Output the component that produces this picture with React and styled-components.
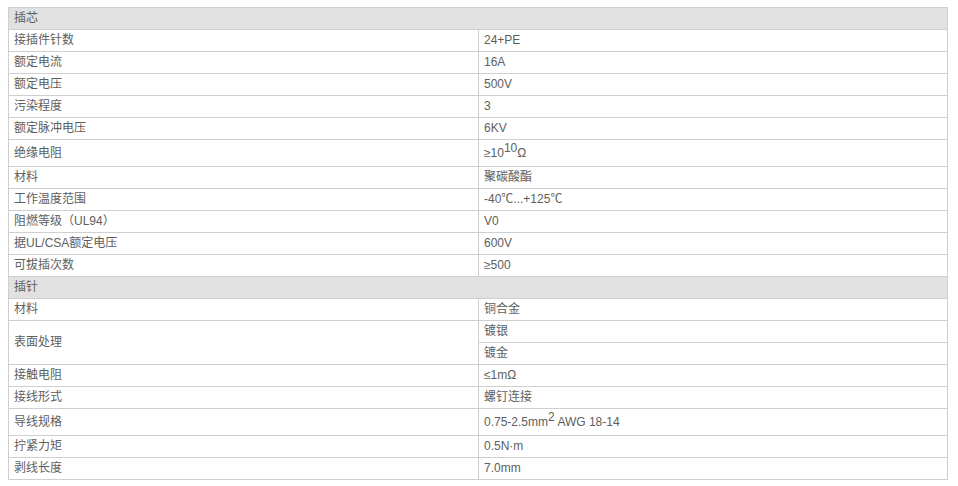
import React from 'react';
import styled, { createGlobalStyle } from 'styled-components';

const GlobalStyle = createGlobalStyle`
  body {
    margin: 0;
    background: #fff;
    font-family: "Liberation Sans", "Noto Sans CJK SC", Arial, sans-serif;
  }
`;

const Page = styled.div`
  padding: 7px 11px 0 8px;
`;

const Table = styled.table`
  width: 940px;
  border-collapse: collapse;
  table-layout: fixed;
  font-size: 12px;
  color: #5e5e5e;
`;

const Cell = styled.td`
  border: 1px solid #cfcfcf;
  padding: 0 5px;
  height: 21px;
  line-height: 21px;
  vertical-align: middle;
  background: ${({ $head }) => ($head ? '#e1e1e1' : '#fff')};
  white-space: nowrap;
`;

const Sup = styled.sup`
  font-size: 12px;
  line-height: 0;
  vertical-align: 5px;
`;

const sections = [
  {
    title: '插芯',
    rows: [
      ['接插件针数', '24+PE'],
      ['额定电流', '16A'],
      ['额定电压', '500V'],
      ['污染程度', '3'],
      ['额定脉冲电压', '6KV'],
      ['绝缘电阻', <>≥10<Sup>10</Sup>Ω</>, true],
      ['材料', '聚碳酸酯'],
      ['工作温度范围', '-40℃...+125℃'],
      ['阻燃等级（UL94）', 'V0'],
      ['据UL/CSA额定电压', '600V'],
      ['可拔插次数', '≥500'],
    ],
  },
  {
    title: '插针',
    rows: [
      ['材料', '铜合金'],
      ['表面处理', ['镀银', '镀金']],
      ['接触电阻', '≤1mΩ'],
      ['接线形式', '螺钉连接'],
      ['导线规格', <>0.75-2.5mm<Sup>2</Sup> AWG 18-14</>, true],
      ['拧紧力矩', '0.5N·m'],
      ['剥线长度', '7.0mm'],
    ],
  },
];

const TallCell = styled(Cell)`
  height: 26px;
  line-height: 26px;
`;

function SpecRow({ label, value, tall }) {
  const C = tall ? TallCell : Cell;
  if (Array.isArray(value)) {
    return (
      <>
        <tr>
          <Cell rowSpan={value.length}>{label}</Cell>
          <Cell>{value[0]}</Cell>
        </tr>
        {value.slice(1).map((v) => (
          <tr key={v}>
            <Cell>{v}</Cell>
          </tr>
        ))}
      </>
    );
  }
  return (
    <tr>
      <C>{label}</C>
      <C>{value}</C>
    </tr>
  );
}

export default function App() {
  return (
    <Page>
      <GlobalStyle />
      <Table>
        <colgroup>
          <col style={{ width: 470 }} />
          <col />
        </colgroup>
        <tbody>
          {sections.map((s) => (
            <React.Fragment key={s.title}>
              <tr>
                <Cell $head colSpan={2}>{s.title}</Cell>
              </tr>
              {s.rows.map(([label, value, tall], i) => (
                <SpecRow key={i} label={label} value={value} tall={tall} />
              ))}
            </React.Fragment>
          ))}
        </tbody>
      </Table>
    </Page>
  );
}
